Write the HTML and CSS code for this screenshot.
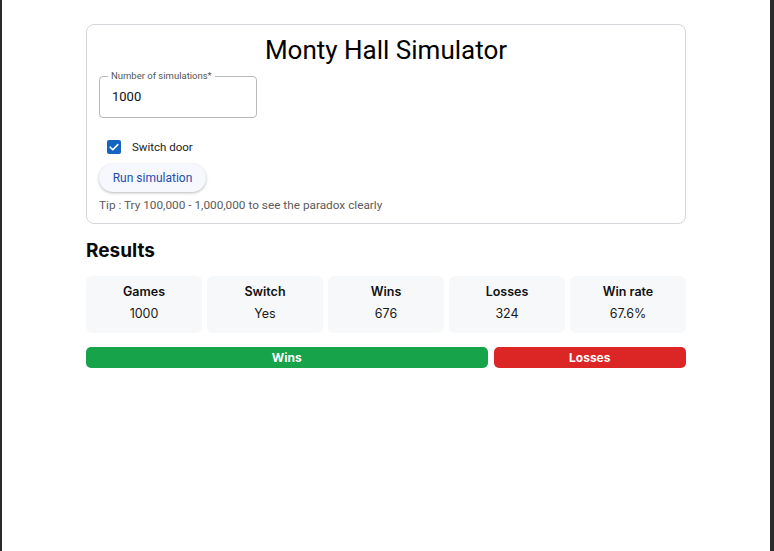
FILE: index.html
```html
<!DOCTYPE html>
<html lang="en">
<head>
<meta charset="utf-8">
<title>Monty Hall Simulator</title>
<link rel="stylesheet" href="styles.css">
</head>
<body>
<main class="page">
  <section class="card">
    <h1 class="title">Monty Hall Simulator</h1>
    <fieldset class="field">
      <legend class="field-label">Number of simulations*</legend>
      <div class="field-value">1000</div>
    </fieldset>
    <label class="check-row">
      <span class="checkbox">
        <svg viewBox="0 0 14 14" width="14" height="14"><path d="M3.2 7.2 L5.8 9.8 L10.8 4.6" fill="none" stroke="#fff" stroke-width="1.6" stroke-linecap="round" stroke-linejoin="round"/></svg>
      </span>
      <span class="check-text">Switch door</span>
    </label>
    <button class="run-btn">Run simulation</button>
    <p class="tip">Tip : Try 100,000 - 1,000,000 to see the paradox clearly</p>
  </section>

  <h2 class="results-title">Results</h2>
  <div class="stats">
    <div class="stat"><div class="stat-label">Games</div><div class="stat-value">1000</div></div>
    <div class="stat"><div class="stat-label">Switch</div><div class="stat-value">Yes</div></div>
    <div class="stat"><div class="stat-label">Wins</div><div class="stat-value">676</div></div>
    <div class="stat"><div class="stat-label">Losses</div><div class="stat-value">324</div></div>
    <div class="stat"><div class="stat-label">Win rate</div><div class="stat-value">67.6%</div></div>
  </div>
  <div class="bars">
    <div class="bar bar-win" style="flex-grow: 676">Wins</div>
    <div class="bar bar-loss" style="flex-grow: 324">Losses</div>
  </div>
</main>
</body>
</html>
```

FILE: styles.css
```css
* { box-sizing: border-box; }
html, body { height: 100%; }
body {
  margin: 0;
  background: #fff;
  border-left: 2px solid #2b2b2b;
  border-right: 4px solid #2b2b2b;
  font-family: Roboto, "Liberation Sans", sans-serif;
  color: #111;
}
.page {
  width: 600px;
  margin: 0 auto;
  padding-top: 24px;
}
.card {
  border: 1px solid #d5d5dc;
  border-radius: 8px;
  padding: 10px 12px 11px 12px;
  display: flex;
  flex-direction: column;
  align-items: flex-start;
}
.title {
  align-self: stretch;
  text-align: center;
  margin: 0;
  font-size: 26px;
  line-height: 30px;
  font-weight: 400;
  color: #000;
}
.field {
  margin: 6px 0 0 0;
  padding: 0 12px;
  width: 158px;
  height: 47px;
  border: 1px solid #b9b9bd;
  border-radius: 4px;
  min-width: 0;
}
.field-label {
  font-size: 9.5px;
  color: #555;
  padding: 0 3px;
  margin-left: -4px;
  line-height: 10px;
}
.field-value {
  font-size: 13px;
  line-height: 16px;
  padding-top: 8px;
  color: #111;
}
.check-row {
  display: flex;
  align-items: center;
  gap: 11px;
  margin-top: 21px;
  margin-left: 8px;
  height: 16px;
}
.checkbox {
  width: 14px;
  height: 14px;
  border-radius: 2px;
  background: #1565c0;
  display: flex;
}
.check-text {
  font-size: 11.5px;
  color: #222;
}
.run-btn {
  margin-top: 9px;
  width: 107px;
  height: 28px;
  border: none;
  border-radius: 14px;
  background: #f7f8fd;
  box-shadow: 0 1px 3px rgba(0,0,0,0.28);
  color: #1b4fae;
  font-family: Roboto, "Liberation Sans", sans-serif;
  font-size: 12px;
  font-weight: 400;
  padding: 0;
}
.tip {
  margin: 6px 0 0 0;
  font-size: 11.8px;
  line-height: 14px;
  color: #5b5b5b;
}
.results-title {
  font-family: Inter, "Liberation Sans", sans-serif;
  font-size: 19px;
  line-height: 24px;
  font-weight: 700;
  margin: 15px 0 0 0;
  color: #0a0a0a;
}
.stats {
  display: grid;
  grid-template-columns: repeat(5, 1fr);
  gap: 5px;
  margin-top: 13px;
}
.stat {
  background: #f7f8fa;
  border-radius: 6px;
  height: 57px;
  display: flex;
  flex-direction: column;
  align-items: center;
  padding-top: 8px;
  font-family: Inter, "Liberation Sans", sans-serif;
}
.stat-label {
  font-size: 12.5px;
  font-weight: 600;
  line-height: 15px;
  color: #111;
}
.stat-value {
  font-size: 12.5px;
  line-height: 15px;
  margin-top: 7px;
  color: #1a1a1a;
}
.bars {
  display: flex;
  gap: 6px;
  margin-top: 14px;
}
.bar {
  flex-basis: 0;
  height: 21px;
  border-radius: 5px;
  color: #fff;
  font-family: Inter, "Liberation Sans", sans-serif;
  font-size: 12px;
  font-weight: 700;
  display: flex;
  align-items: center;
  justify-content: center;
}
.bar-win { background: #16a34a; }
.bar-loss { background: #dc2626; }
```
